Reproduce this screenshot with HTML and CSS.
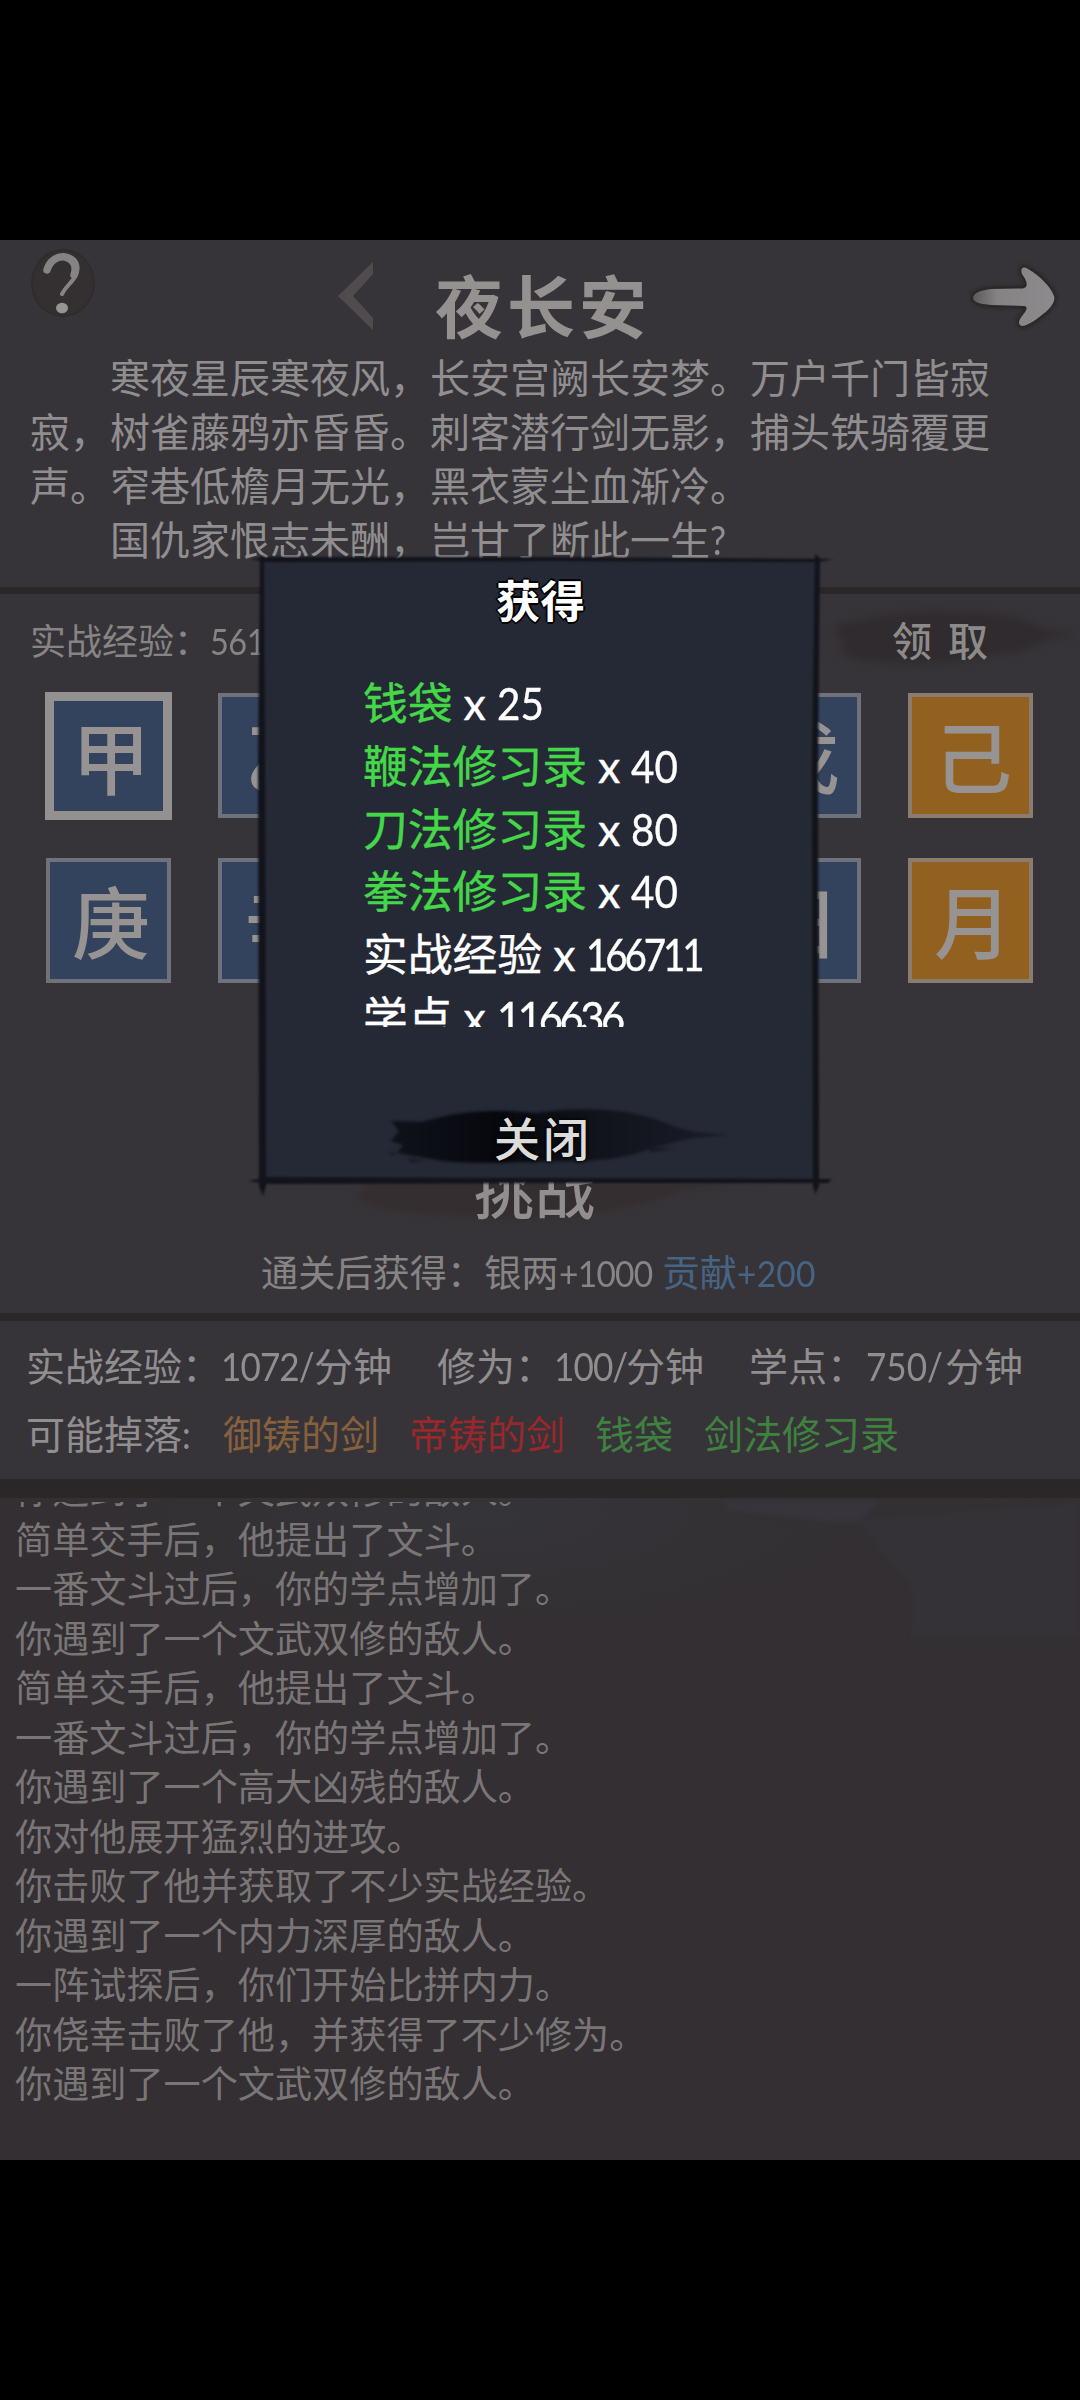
FILE: index.html
```html
<!DOCTYPE html>
<html lang="zh-CN">
<head>
<meta charset="utf-8">
<title>夜长安</title>
<link rel="stylesheet" href="styles.css">
</head>
<body>
<div class="game">
  <header class="intro">
    <div class="topbar">
      <svg class="help" viewBox="0 0 66 70" width="66" height="70">
        <ellipse cx="33" cy="35" rx="31" ry="33" fill="#343032" stroke="#302c2e" stroke-width="2"/>
        <path d="M17 21 C20 11 28 7 36 8 C46 9 50 18 46 27 C42 35 36 38 32 46" fill="none" stroke="#858384" stroke-width="4" stroke-linecap="round"/>
        <path d="M17 22 C20 12 28 8 35 9 C44 11 47 19 44 27" fill="none" stroke="#858384" stroke-width="7.5" stroke-linecap="round"/>
        <ellipse cx="32" cy="60" rx="6" ry="5.2" fill="#969495"/>
      </svg>
      <svg class="prev" viewBox="0 0 35 68" width="35" height="68"><path d="M0 34 L35 0 V12 L15 34 L35 56 V68 Z" fill="#504c4e"/></svg>
      <h1 class="title">夜长安</h1>
      <svg class="next" viewBox="0 0 100 76" width="100" height="76">
        <defs>
          <linearGradient id="ink" x1="0" x2="1"><stop offset="0" stop-color="#5d5a5b"/><stop offset=".3" stop-color="#868385"/><stop offset="1" stop-color="#8d8a8d"/></linearGradient>
          <filter id="soft"><feGaussianBlur stdDeviation="1.6"/></filter>
          <path id="arrow" d="M10 38 C10 33 18 30 28 29 L60 28.5 C66 27 64 21 59 14 C57 8 60 6 65 9 C76 15 88 27 91 36 C93 41 87 49 80 54 C73 60 64 66 59 66 C55 65 55 61 59 56 C63 51 66 47 61 46 L28 45 C18 44 11 43 10 38 Z"/>
        </defs>
        <use href="#arrow" fill="#2a2627" stroke="#2a2627" stroke-width="6" filter="url(#soft)"/>
        <use href="#arrow" fill="url(#ink)"/>
      </svg>
    </div>
    <div class="story">
      <p class="indent">寒夜星辰寒夜风，长安宫阙长安梦。万户千门皆寂</p>
      <p>寂，树雀藤鸦亦昏昏。刺客潜行剑无影，捕头铁骑覆更</p>
      <p>声。窄巷低檐月无光，黑衣蒙尘血渐冷。</p>
      <p class="indent">国仇家恨志未酬，岂甘了断此一生<span class="latin">?</span></p>
    </div>
  </header>

  <section class="levels">
    <div class="exp-row">
      <span class="exp">实战经验：<span class="latin w561">561</span></span>
      <button class="claim">
        <svg class="stroke" viewBox="0 0 250 60" width="250" height="60"><path d="M6 14 L28 12 C60 3 100 0 130 4 C165 1 195 10 215 20 L250 26 L215 31 C200 41 180 45 160 46 C130 56 60 58 25 50 L8 44 L14 34 L4 26 Z" fill="#302b2e"/></svg>
        <span>领取</span>
      </button>
    </div>
    <div class="tiles">
      <div class="tile selected">甲</div><div class="tile">乙</div><div class="tile">丙</div><div class="tile">丁</div><div class="tile">戊</div><div class="tile gold">己</div>
      <div class="tile">庚</div><div class="tile">辛</div><div class="tile">壬</div><div class="tile">癸</div><div class="tile">日</div><div class="tile gold">月</div>
    </div>
    <button class="challenge">
      <svg class="stroke" viewBox="0 0 440 80" width="440" height="80"><path d="M8 20 L60 8 C130 -2 230 2 300 12 L440 26 L330 44 C280 66 190 74 130 70 C90 68 50 66 30 60 L2 50 L16 38 Z" fill="#352e30"/></svg>
      <span>挑战</span>
    </button>
    <p class="reward">通关后获得：银两<span class="latin w1000">+1000</span><span class="blue">贡献<span class="latin w200">+200</span></span></p>
  </section>

  <section class="rates">
    <p class="rate-row"><span class="r1">实战经验：<span class="latin w1072">1072/</span>分钟</span><span class="r2">修为：<span class="latin w100">100/</span>分钟</span><span>学点：<span class="latin w750">750/</span>分钟</span></p>
    <p class="drop-row"><span class="d0">可能掉落<span class="latin">:</span></span><span class="d1">御铸的剑</span><span class="d2">帝铸的剑</span><span class="d3">钱袋</span><span class="d4">剑法修习录</span></p>
  </section>

  <section class="log">
    <svg class="wash" viewBox="0 0 400 160" width="400" height="160">
      <path d="M45 2 L200 2 L180 24 L150 24 L48 12 Z" fill="#37353b"/>
      <path d="M180 20 L400 4 V140 H230 L232 90 Q200 60 180 20 Z" fill="#343237"/>
    </svg>
    <div class="log-view">
      <div class="log-lines">
        <p>你遇到了一个文武双修的敌人。</p>
        <p>简单交手后，他提出了文斗。</p>
        <p>一番文斗过后，你的学点增加了。</p>
        <p>你遇到了一个文武双修的敌人。</p>
        <p>简单交手后，他提出了文斗。</p>
        <p>一番文斗过后，你的学点增加了。</p>
        <p>你遇到了一个高大凶残的敌人。</p>
        <p>你对他展开猛烈的进攻。</p>
        <p>你击败了他并获取了不少实战经验。</p>
        <p>你遇到了一个内力深厚的敌人。</p>
        <p>一阵试探后，你们开始比拼内力。</p>
        <p>你侥幸击败了他，并获得了不少修为。</p>
        <p>你遇到了一个文武双修的敌人。</p>
      </div>
    </div>
  </section>

  <div class="modal">
    <svg class="frame" viewBox="0 0 590 650" width="590" height="650">
      <g fill="#12131b">
        <path d="M2 13 L20 11 L300 11 L586 13 L570 16 L300 15 L20 16 Z"/>
        <path d="M12 10 L16 10 L17 220 L18 640 L15 650 L11 640 L10 220 Z"/>
        <path d="M567 8 L572 12 L570 220 L571 640 L567 648 L565 640 L564 220 Z"/>
        <path d="M0 635 L20 631 L300 632 L584 633 L580 637 L300 637 L20 638 Z"/>
      </g>
    </svg>
    <h2 class="modal-title">获得</h2>
    <ul class="loot">
      <li><b>钱袋</b><i>x</i><span class="latin">25</span></li>
      <li><b>鞭法修习录</b><i>x</i><span class="latin">40</span></li>
      <li><b>刀法修习录</b><i>x</i><span class="latin">80</span></li>
      <li><b>拳法修习录</b><i>x</i><span class="latin">40</span></li>
      <li>实战经验<i>x</i><span class="latin tight">166711</span></li>
      <li>学点<i>x</i><span class="latin mid">116636</span></li>
    </ul>
    <button class="close">
      <svg class="stroke" viewBox="0 0 344 58" width="344" height="58">
        <defs><linearGradient id="brush" x1="0" x2="1"><stop offset="0" stop-color="#0f121a"/><stop offset=".3" stop-color="#07080e"/><stop offset=".6" stop-color="#10131b"/><stop offset="1" stop-color="#1a1d28"/></linearGradient></defs>
        <path d="M4 14 L34 15 L62 8 C90 3 120 3 150 6 C190 -1 240 2 268 12 C282 17 296 23 308 25 L344 28 L308 31 C290 34 278 38 262 42 C235 53 200 55 160 54 C100 57 60 56 44 52 L10 46 L16 38 L4 34 L12 24 Z" fill="url(#brush)"/>
        <path d="M262 42 L288 41 L264 45 Z M20 52 L40 54 L24 55 Z M2 45 L10 47 L4 48 Z" fill="#12151e"/>
      </svg>
      <span>关闭</span>
    </button>
  </div>
</div>
</body>
</html>
```
FILE: styles.css
```css
* { box-sizing: border-box; margin: 0; padding: 0; }
body {
  width: 1080px;
  height: 2400px;
  padding: 240px 0;
  background: #000;
  font-family: "Noto Sans CJK SC", sans-serif;
  color: #918e90;
  overflow: hidden;
}
p, li, h1, h2 { white-space: nowrap; }
button { border: 0; background: none; font: inherit; color: inherit; }
.latin {
  display: inline-block;
  font-family: Lato, "Noto Sans CJK SC", sans-serif;
  line-height: 1;
  transform: scaleX(.9);
  transform-origin: left;
}
.game {
  position: relative;
  display: flex;
  flex-direction: column;
  height: 1920px;
  background: #373439;
  overflow: hidden;
}

/* intro */
.intro { height: 354px; border-bottom: 7px solid #2b2729; }
.topbar { display: flex; align-items: flex-start; height: 109px; }
.help { margin: 8px 0 0 30px; }
.prev { margin: 22px 0 0 242px; }
.title {
  width: 230px;
  margin: 16px 0 0 62px;
  font-size: 68px;
  line-height: 96px;
  letter-spacing: 4px;
  font-weight: 700;
  color: #949190;
}
.next { margin: 20px 0 0 298px; }
.story { padding-left: 30px; font-size: 40px; line-height: 54px; }
.indent { padding-left: 80px; }

/* levels */
.levels { height: 727px; border-bottom: 8px solid #2b2729; display: flex; flex-direction: column; }
.exp-row { display: flex; justify-content: space-between; height: 92px; padding: 15px 0 0 30px; font-size: 36px; line-height: 60px; color: #878485; }
.w561 { width: 60px; letter-spacing: -.5px; }
.claim { position: relative; width: 248px; height: 60px; margin-top: 0; padding-left: 60px; font-size: 40px; line-height: 60px; letter-spacing: 16px; font-weight: 500; text-align: left; color: #8d8a8a; }
.stroke { position: absolute; left: 0; top: 0; filter: blur(1.4px); }
.claim .stroke { filter: blur(4px); }
.challenge .stroke { filter: blur(3px); }
.claim span, .challenge span, .close span { position: relative; }
.tiles { display: grid; grid-template-columns: repeat(6, 125px); grid-auto-rows: 125px; column-gap: 47.4px; row-gap: 40px; padding: 7px 0 0 46px; }
.tile {
  border: 4px solid #6f727a;
  background: #33435d;
  color: #979392;
  font-size: 78px;
  line-height: 114px;
  font-weight: 500;
  padding-left: 5px;
  text-align: center;
}
.gold { background: #93611f; border-color: #8a7d70; }
.selected { width: 127px; height: 128px; margin: -1px; border: 9px solid #94908f; line-height: 109px; }
.challenge { position: relative; width: 440px; height: 80px; margin: 165px 0 0 350px; padding: 0 0 0 124px; font-size: 60px; line-height: 70px; letter-spacing: 1px; font-weight: 500; text-align: left; }
.reward { margin: 13px 0 0 261px; font-size: 37.2px; line-height: 60px; color: #878485; }
.w1000 { width: 104px; letter-spacing: -.8px; }
.w200 { letter-spacing: .3px; }
.blue { color: #466584; }

/* rates */
.rates { height: 177px; border-bottom: 19px solid #2b2728; padding: 13px 0 0 26px; font-size: 39px; line-height: 60px; }
.rate-row, .drop-row { display: flex; height: 67.5px; }
.r1 { width: 411px; }
.r2 { width: 312px; }
.w1072 { width: 93px; letter-spacing: -1px; }
.w100 { width: 72px; letter-spacing: -1px; }
.w750 { width: 79px; }
.d0 { width: 197px; }
.d1 { width: 186px; color: #87603d; }
.d2 { width: 186px; color: #9a2729; }
.d3 { width: 109px; color: #3f8240; }
.d4 { color: #3f8240; }

/* log */
.log {
  position: relative;
  flex: 1;
  padding: 4px 0 0 15px;
  font-size: 37.15px;
  line-height: 49.5px;
  color: #7a7677;
  background:
    radial-gradient(ellipse 420px 120px at 480px 20px, #353439, transparent),
    #332f32;
}
.wash { position: absolute; right: 0; top: 0; filter: blur(2px); }
.log-view { position: relative; height: 640px; overflow: hidden; }
.log-lines { margin-top: -38px; }

/* modal */
.modal {
  position: absolute;
  left: 263px;
  top: 320px;
  width: 553px;
  height: 621px;
  background: #252935;
  color: #fff;
  display: flex;
  flex-direction: column;
}
.frame { position: absolute; left: -15px; top: -14px; filter: blur(1px); }
.modal-title {
  height: 110px;
  padding: 8px 0 0 2px;
  font-size: 44.5px;
  line-height: 62px;
  text-align: center;
  text-shadow: 2px 0 #000, -2px 0 #000, 0 2px #000, 0 -2px #000, 1px 1px #000;
}
.loot { position: relative; height: 357px; padding-left: 100px; overflow: hidden; list-style: none; font-size: 44.8px; line-height: 62.8px; -webkit-text-stroke: .4px; }
.loot li { height: 62.8px; }
.loot b { font-weight: 400; color: #44d849; }
.loot i { display: inline-block; width: 44px; padding-left: 11px; font-family: Lato, sans-serif; font-style: normal; line-height: 1; }
.tight, .mid { letter-spacing: -3.6px; }
.tight { transform: scaleX(.86); }
.mid { transform: scaleX(.93); }
.close { position: relative; width: 344px; height: 58px; margin: 80px 0 0 124px; padding-left: 107px; font-size: 46px; line-height: 55px; letter-spacing: 3px; font-weight: 500; color: #dcdcdb; text-align: left; text-shadow: 0 0 5px #000, 0 0 3px #000; }
```
